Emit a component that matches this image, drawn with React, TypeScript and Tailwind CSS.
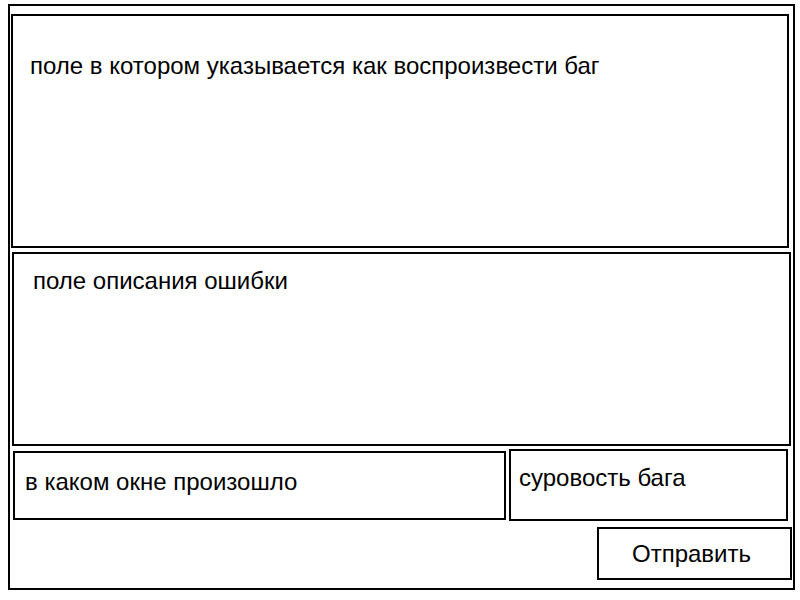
export default function App() {
  return (
    <div className="bg-white pl-[8px] pt-[4px] h-[600px] w-[800px] font-['Liberation_Sans',Arial,sans-serif] text-black">
      <div className="flex h-[586px] w-[787px] flex-col border-2 border-black">
        {/* steps to reproduce */}
        <div className="ml-[1px] mt-[8px] h-[234px] w-[778px] border-2 border-black pl-[17px] pt-[36px] text-[24px] leading-[28px]">
          поле в котором указывается как воспроизвести баг
        </div>

        {/* description */}
        <div className="ml-[2px] mt-[4px] h-[194px] w-[779px] border-2 border-black pl-[19px] pt-[13px] text-[24px] leading-[28px]">
          поле описания ошибки
        </div>

        <div className="flex items-start">
          <div className="ml-[3px] mt-[5px] h-[69px] w-[493px] border-2 border-black pl-[10px] pt-[15px] text-[24px] leading-[28px]">
            в каком окне произошло
          </div>
          <div className="ml-[3px] mt-[3px] h-[72px] w-[279px] border-2 border-black pl-[8px] pt-[13px] text-[24px] leading-[28px]">
            суровость бага
          </div>
        </div>

        <div className="flex justify-end pr-[1px] pt-[6px]">
          <button
            type="button"
            className="h-[53px] w-[195px] border-2 border-black bg-white pr-[6px] text-[24px] leading-[28px]"
          >
            Отправить
          </button>
        </div>
      </div>
    </div>
  );
}
